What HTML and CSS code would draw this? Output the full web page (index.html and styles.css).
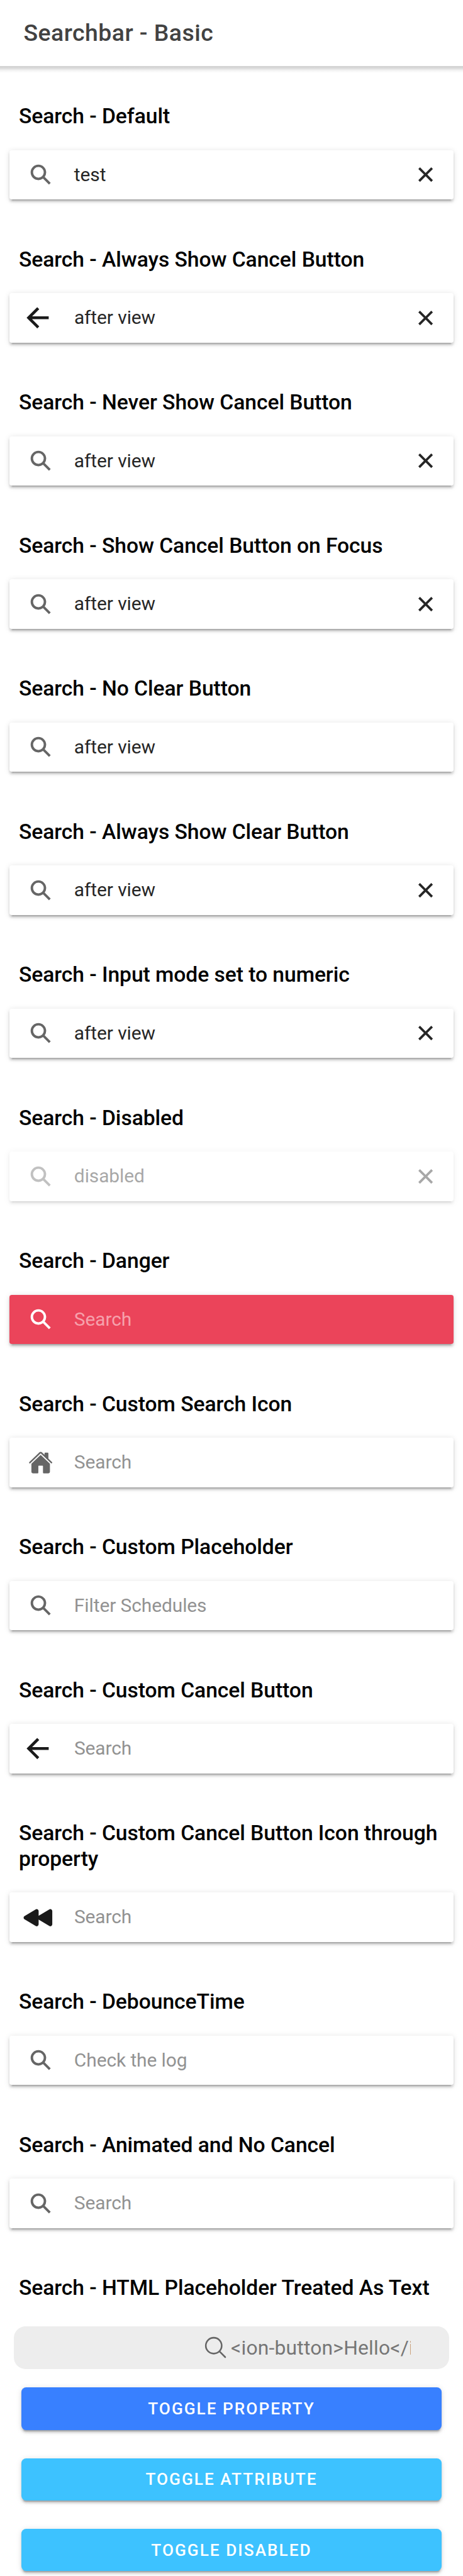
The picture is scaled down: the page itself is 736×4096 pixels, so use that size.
FILE: index.html
```html
<!DOCTYPE html>
<html lang="en">
<head>
<meta charset="utf-8">
<title>Searchbar - Basic</title>
<link rel="stylesheet" href="styles.css">
</head>
<body>
<svg class="sprite" aria-hidden="true">
  <symbol id="search" viewBox="0 0 512 512"><path d="M464 428L339.92 303.9a160.48 160.48 0 0030.72-94.58C370.64 120.37 298.27 48 209.32 48S48 120.37 48 209.32s72.37 161.32 161.32 161.32a160.48 160.48 0 0094.58-30.72L428 464zM209.32 319.69a110.38 110.38 0 11110.37-110.37 110.5 110.5 0 01-110.37 110.37z"/></symbol>
  <symbol id="close" viewBox="0 0 512 512"><path d="M400 145.49L366.51 112 256 222.51 145.49 112 112 145.49 222.51 256 112 366.51 145.49 400 256 289.49 366.51 400 400 366.51 289.49 256z"/></symbol>
  <symbol id="back" viewBox="0 0 512 512"><path d="M244 400L100 256l144-144M120 256h292" fill="none" stroke="currentColor" stroke-width="48" stroke-linecap="square" stroke-miterlimit="10"/></symbol>
  <symbol id="rewind" viewBox="0 0 512 512"><path d="M30.71 229.47l188.87-113a30.54 30.54 0 0131.09-.39 33.74 33.74 0 0116.76 29.47v79.05l180.72-108.16a30.54 30.54 0 0131.09-.39A33.74 33.74 0 01496 145.52v221A33.73 33.73 0 01479.24 396a30.54 30.54 0 01-31.09-.39L267.43 287.4v79.08A33.74 33.74 0 01250.67 396a30.54 30.54 0 01-31.09-.39l-188.87-113a31.27 31.27 0 010-53.14z"/></symbol>
  <symbol id="home" viewBox="0 0 512 512"><path d="M261.56 101.28a8 8 0 00-11.06 0L66.4 277.15a8 8 0 00-2.47 5.79L63.9 448a32 32 0 0032 32H192a16 16 0 0016-16V328a8 8 0 018-8h80a8 8 0 018 8v136a16 16 0 0016 16h96.06a32 32 0 0032-32V282.94a8 8 0 00-2.47-5.79z"/><path d="M490.91 244.15l-74.8-71.56V64a16 16 0 00-16-16h-48a16 16 0 00-16 16v32l-57.92-55.38C272.77 35.14 264.71 32 256 32c-8.68 0-16.72 3.14-22.14 8.63l-212.7 203.5c-6.22 6-7 15.87-1.34 22.37A16 16 0 0043 267.56L250.5 69.28a8 8 0 0111.06 0l207.52 198.28a16 16 0 0022.59-.44c6.14-6.36 5.63-16.86-.76-22.97z"/></symbol>
  <symbol id="search-outline" viewBox="0 0 512 512"><g fill="none" stroke="currentColor" stroke-width="32"><circle cx="221.09" cy="221.09" r="157.09" stroke-miterlimit="10"/><path d="M338.29 338.29L448 448" stroke-linecap="round"/></g></symbol>
</svg>

<header class="toolbar"><h1 class="title">Searchbar - Basic</h1></header>

<main class="content">
  <h5 class="heading">Search - Default</h5>
  <div class="searchbar"><svg class="icon"><use href="#search"/></svg><span class="value">test</span><svg class="clear"><use href="#close"/></svg></div>

  <h5 class="heading">Search - Always Show Cancel Button</h5>
  <div class="searchbar"><svg class="icon cancel"><use href="#back"/></svg><span class="value">after view</span><svg class="clear"><use href="#close"/></svg></div>

  <h5 class="heading">Search - Never Show Cancel Button</h5>
  <div class="searchbar"><svg class="icon"><use href="#search"/></svg><span class="value">after view</span><svg class="clear"><use href="#close"/></svg></div>

  <h5 class="heading">Search - Show Cancel Button on Focus</h5>
  <div class="searchbar"><svg class="icon"><use href="#search"/></svg><span class="value">after view</span><svg class="clear"><use href="#close"/></svg></div>

  <h5 class="heading">Search - No Clear Button</h5>
  <div class="searchbar"><svg class="icon"><use href="#search"/></svg><span class="value">after view</span></div>

  <h5 class="heading">Search - Always Show Clear Button</h5>
  <div class="searchbar"><svg class="icon"><use href="#search"/></svg><span class="value">after view</span><svg class="clear"><use href="#close"/></svg></div>

  <h5 class="heading">Search - Input mode set to numeric</h5>
  <div class="searchbar"><svg class="icon"><use href="#search"/></svg><span class="value">after view</span><svg class="clear"><use href="#close"/></svg></div>

  <h5 class="heading">Search - Disabled</h5>
  <div class="searchbar disabled"><svg class="icon"><use href="#search"/></svg><span class="value">disabled</span><svg class="clear"><use href="#close"/></svg></div>

  <h5 class="heading">Search - Danger</h5>
  <div class="searchbar danger"><svg class="icon"><use href="#search"/></svg><span class="value placeholder">Search</span></div>

  <h5 class="heading">Search - Custom Search Icon</h5>
  <div class="searchbar"><svg class="icon"><use href="#home"/></svg><span class="value placeholder">Search</span></div>

  <h5 class="heading">Search - Custom Placeholder</h5>
  <div class="searchbar"><svg class="icon"><use href="#search"/></svg><span class="value placeholder">Filter Schedules</span></div>

  <h5 class="heading">Search - Custom Cancel Button</h5>
  <div class="searchbar"><svg class="icon cancel"><use href="#back"/></svg><span class="value placeholder">Search</span></div>

  <h5 class="heading">Search - Custom Cancel Button Icon through property</h5>
  <div class="searchbar"><svg class="icon cancel rewind"><use href="#rewind"/></svg><span class="value placeholder">Search</span></div>

  <h5 class="heading">Search - DebounceTime</h5>
  <div class="searchbar"><svg class="icon"><use href="#search"/></svg><span class="value placeholder">Check the log</span></div>

  <h5 class="heading">Search - Animated and No Cancel</h5>
  <div class="searchbar"><svg class="icon"><use href="#search"/></svg><span class="value placeholder">Search</span></div>

  <h5 class="heading">Search - HTML Placeholder Treated As Text</h5>
  <div class="searchbar-ios"><svg class="icon-ios"><use href="#search-outline"/></svg><span class="value-ios">&lt;ion-button&gt;Hello&lt;/ion-button&gt;</span></div>

  <div class="actions">
    <button class="button primary">Toggle Property</button>
    <button class="button secondary">Toggle Attribute</button>
    <button class="button secondary">Toggle Disabled</button>
  </div>
</main>
</body>
</html>
```
FILE: styles.css
```css
html {
  font-size: 18.711px; /* 1rem = 10 layout units */
}

*,
*::before,
*::after {
  box-sizing: border-box;
}

body {
  margin: 0;
  height: 4096px;
  overflow: hidden;
  background: #fff;
  color: #000;
  font-family: Roboto, "Liberation Sans", sans-serif;
}

.sprite {
  display: none;
}

.toolbar {
  position: relative;
  display: flex;
  align-items: center;
  height: 5.6rem;
  padding: 0 2rem;
}

.toolbar::after {
  content: "";
  position: absolute;
  left: 0;
  right: 0;
  top: 100%;
  height: 0.6rem;
  background: linear-gradient(#d0d0d0, #dadada 30%, #f4f4f4 65%, #fff);
}

.title {
  margin: 0;
  color: #424242;
  font-size: 2rem;
  font-weight: 500;
  letter-spacing: 0.0125em;
}

.content {
  display: flow-root;
}

.heading {
  margin: 3.23rem 1.6rem 0.97rem;
  font-size: 1.8rem;
  font-weight: 500;
  letter-spacing: -0.0018em;
  line-height: 1.2;
}

.searchbar {
  display: flex;
  align-items: center;
  height: 4.2rem;
  margin: 1.77rem 0.8rem 3.97rem;
  padding: 0 1.3rem 0 1.6rem;
  border-radius: 0.2rem;
  background: #fff;
  box-shadow: 0 0.2rem 0.2rem 0 rgba(0, 0, 0, 0.14),
    0 0.3rem 0.1rem -0.2rem rgba(0, 0, 0, 0.2),
    0 0.1rem 0.5rem 0 rgba(0, 0, 0, 0.12);
}

/* Space between a bar and the heading that follows it */
.searchbar + .heading {
  margin-top: 4.03rem;
}

.icon {
  flex: none;
  width: 2.1rem;
  height: 2.1rem;
  margin-right: 1.8rem;
  color: #666;
  fill: currentColor;
}

.cancel {
  width: 2.6rem;
  height: 2.6rem;
  margin: 0 1.8rem 0 -0.5rem;
  color: #1a1a1a;
}

.rewind {
  margin-top: 0.1rem;
}

.value {
  flex: 1;
  color: #262626;
  font-size: 1.6rem;
  letter-spacing: -0.003em;
  line-height: 3rem;
}

.placeholder {
  color: #929292;
}

.clear {
  flex: none;
  width: 2.2rem;
  height: 2.2rem;
  fill: #262626;
}

.disabled {
  opacity: 0.4;
}

.danger {
  background: #eb445a;
}

.danger .icon {
  color: #fff;
}

.danger .placeholder {
  color: #f6a1ac;
}

.searchbar-ios {
  display: flex;
  align-items: center;
  height: 3.6rem;
  margin: 2.17rem 1.2rem 1.6rem;
  padding: 0 3.24rem 0 16rem;
  border-radius: 1rem;
  background: #ededed;
}

.icon-ios {
  flex: none;
  width: 2.2rem;
  height: 2.2rem;
  margin-right: 0.22rem;
  color: #666;
}

.value-ios {
  flex: 1;
  overflow: hidden;
  color: #767676;
  font-size: 1.7rem;
  letter-spacing: 0.0065em;
  white-space: nowrap;
}

.actions {
  display: flex;
  flex-direction: column;
  gap: 2.4rem;
  margin: 0 1.8rem;
}

.button {
  height: 3.6rem;
  padding: 0;
  border: 0;
  border-radius: 0.4rem;
  color: #fff;
  font: 500 1.4rem Roboto, "Liberation Sans", sans-serif;
  letter-spacing: 0.077em;
  text-transform: uppercase;
  box-shadow: 0 0.3rem 0.1rem -0.2rem rgba(0, 0, 0, 0.2),
    0 0.2rem 0.2rem 0 rgba(0, 0, 0, 0.14),
    0 0.1rem 0.5rem 0 rgba(0, 0, 0, 0.12);
}

.primary {
  background: #3880ff;
}

.secondary {
  background: #3dc2ff;
}
```
